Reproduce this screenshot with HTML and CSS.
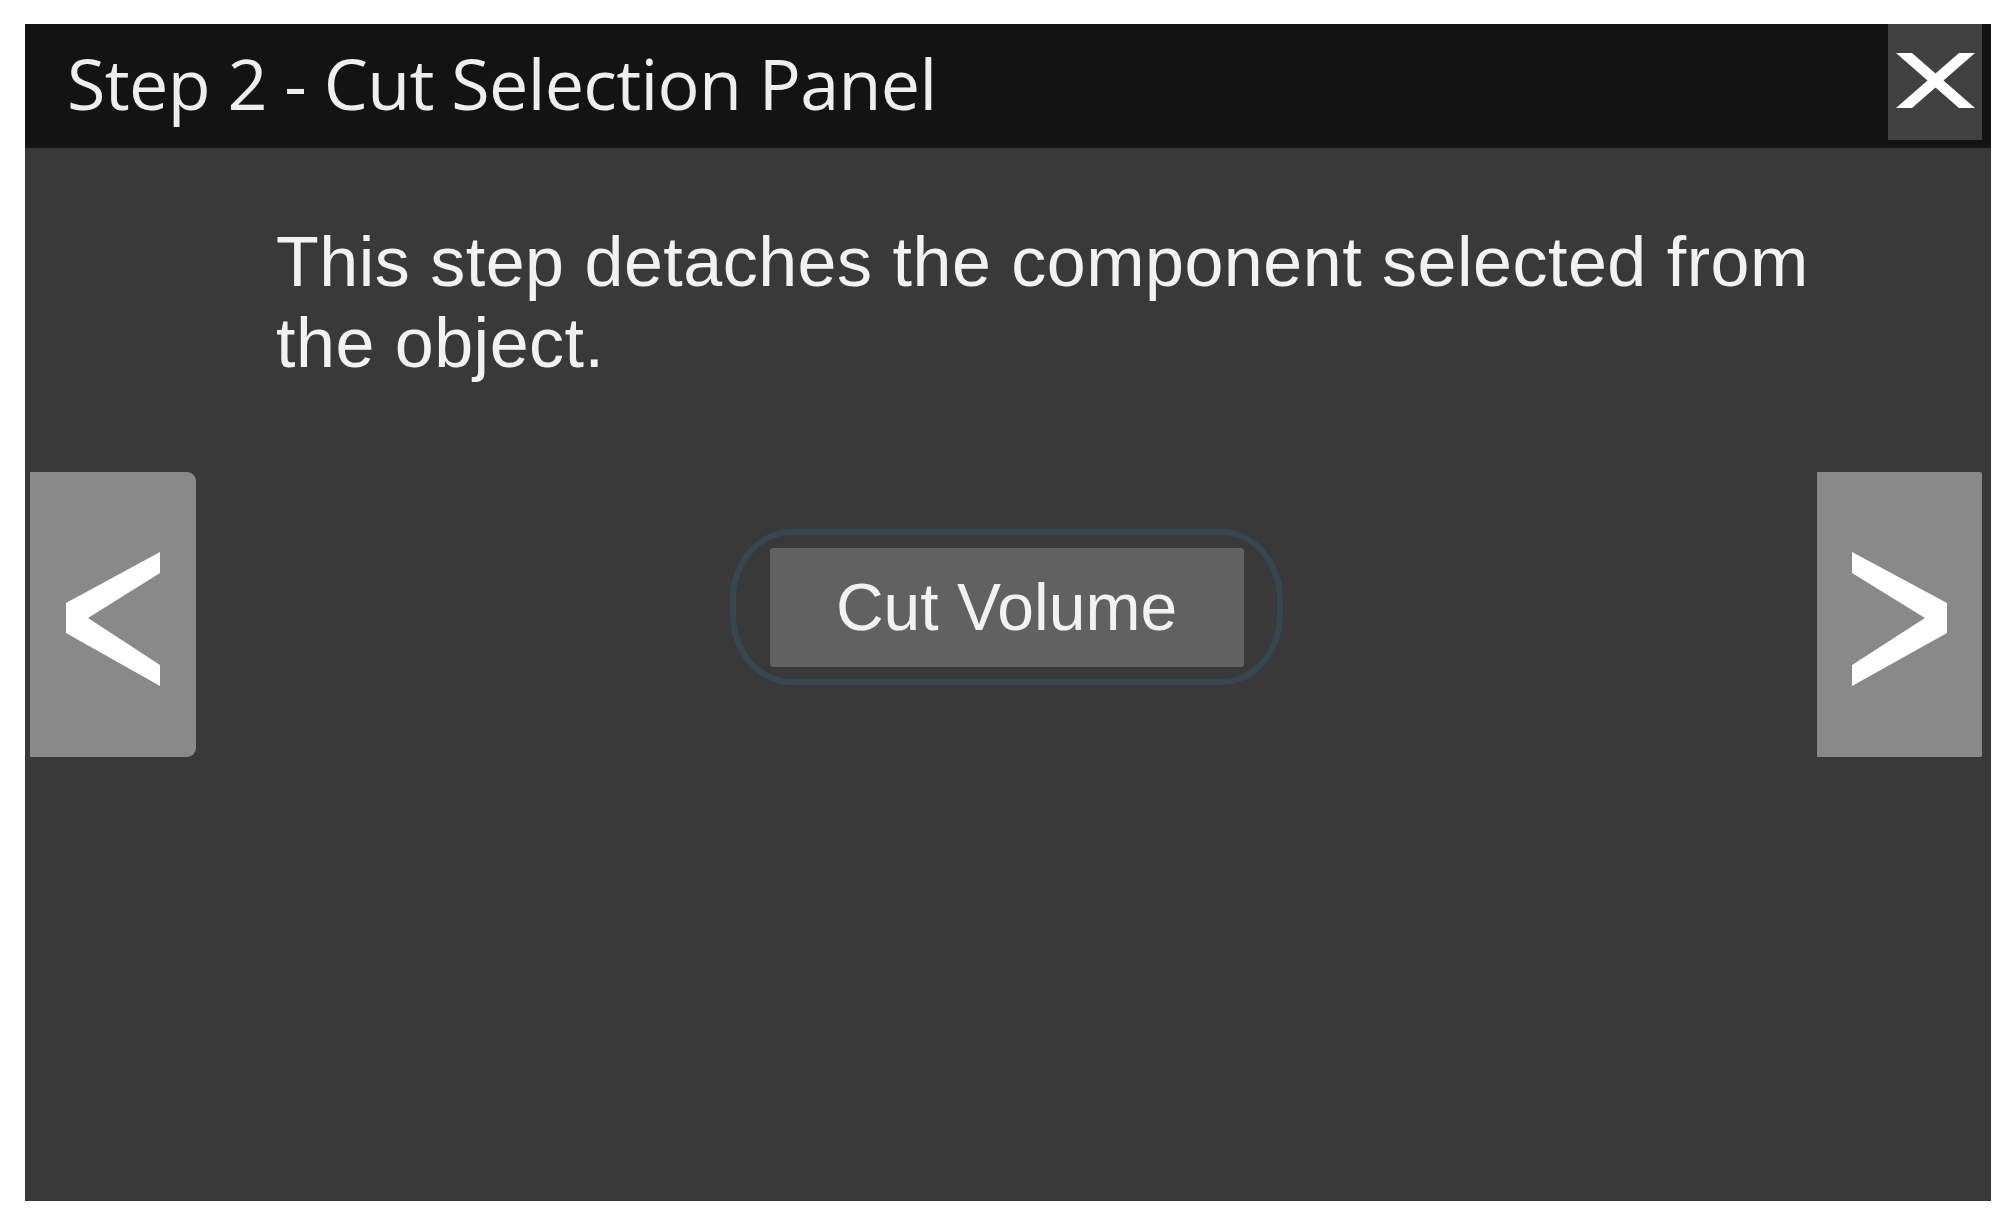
FILE: index.html
```html
<!DOCTYPE html>
<html>
<head>
<meta charset="utf-8">
<title>Cut Selection Panel</title>
<link rel="stylesheet" href="styles.css">
</head>
<body>
<div class="panel">
  <div class="header">
    <div class="title">Step 2 - Cut Selection Panel</div>
    <div class="close">
      <svg width="94" height="116" viewBox="0 0 94 116">
        <polygon points="8,29 24,29 87,84 71,84" fill="#ffffff"/>
        <polygon points="71,29 87,29 24,84 8,84" fill="#ffffff"/>
      </svg>
    </div>
  </div>
  <div class="body">
    <p class="desc">This step detaches the component selected from the object.</p>
    <div class="nav">
      <div class="navbtn prev">
        <svg width="166" height="285" viewBox="0 0 166 285">
          <polygon points="130,80 36,131 36,161 130,214 130,193 58,146 130,101" fill="#ffffff"/>
        </svg>
      </div>
      <div class="center">
        <div class="pill">
          <div class="action">Cut Volume</div>
        </div>
      </div>
      <div class="navbtn next">
        <svg width="165" height="285" viewBox="0 0 165 285">
          <polygon points="35,80 130,131 130,161 35,214 35,193 108,146 35,101" fill="#ffffff"/>
        </svg>
      </div>
    </div>
  </div>
</div>
</body>
</html>
```
FILE: styles.css
```css
html, body {
  margin: 0;
  padding: 0;
  background: #ffffff;
}

.panel {
  margin: 24px 19px 0 25px;
  width: 1966px;
  height: 1177px;
  background: #393939;
  display: flex;
  flex-direction: column;
}

.header {
  height: 124px;
  background: #131313;
  display: flex;
  justify-content: space-between;
  align-items: flex-start;
}

.title {
  font-family: "Open Sans", "Noto Sans", sans-serif;
  font-size: 70px;
  line-height: 70px;
  letter-spacing: -0.65px;
  color: #eeeeee;
  padding: 24px 0 0 42px;
}

.close {
  width: 94px;
  height: 116px;
  margin-right: 9px;
  background: #414141;
}

.close svg,
.navbtn svg {
  display: block;
}

.body {
  display: flex;
  flex-direction: column;
}

.desc {
  margin: 74px 0 0 251px;
  width: 1590px;
  font-family: "Liberation Sans", Arial, sans-serif;
  font-size: 70px;
  line-height: 81px;
  letter-spacing: 0.5px;
  color: #f2f2f2;
}

.nav {
  margin-top: 88px;
  display: grid;
  grid-template-columns: auto 1fr auto;
  align-items: start;
}

.navbtn {
  height: 285px;
  background: #898989;
}

.prev {
  width: 166px;
  margin-left: 5px;
  border-radius: 0 9px 9px 0;
}

.next {
  width: 165px;
  margin-right: 9px;
  border-radius: 0 2px 2px 0;
}

.center {
  display: flex;
  justify-content: center;
  padding-top: 57px;
}

.pill {
  width: 541px;
  height: 144px;
  border: 6px solid #37474f;
  border-radius: 62px / 70px;
  display: flex;
  align-items: center;
  justify-content: center;
}

.action {
  width: 474px;
  height: 119px;
  background: #616161;
  border-radius: 3px;
  font-family: "Liberation Sans", Arial, sans-serif;
  font-size: 66px;
  color: #f2f2f2;
  display: flex;
  align-items: center;
  justify-content: center;
}
```
